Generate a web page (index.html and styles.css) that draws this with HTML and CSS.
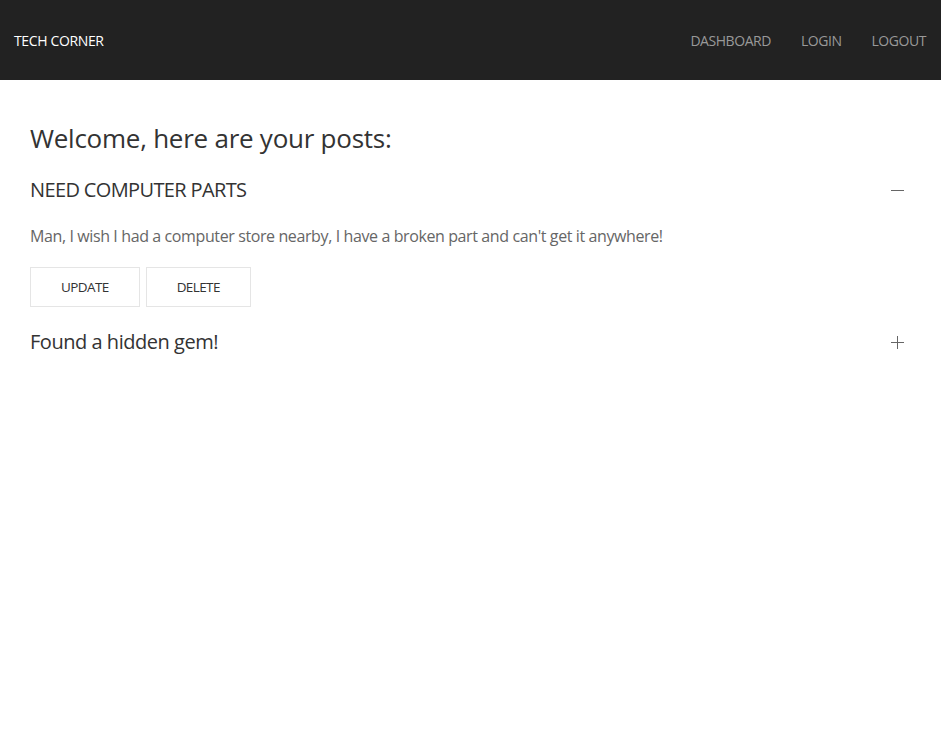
FILE: index.html
```html
<!DOCTYPE html>
<html lang="en">
<head>
<meta charset="utf-8">
<title>Tech Corner</title>
<link rel="stylesheet" href="styles.css">
</head>
<body>
<nav class="navbar">
  <a class="logo" href="#">TECH CORNER</a>
  <ul class="nav">
    <li><a href="#">DASHBOARD</a></li>
    <li><a href="#">LOGIN</a></li>
    <li><a href="#">LOGOUT</a></li>
  </ul>
</nav>
<main class="container">
  <h3 class="welcome">Welcome, here are your posts:</h3>
  <ul class="accordion">
    <li class="item open">
      <a class="title caps" href="#">NEED COMPUTER PARTS
        <svg class="icon" width="13" height="13" viewBox="0 0 13 13"><rect x="0" y="6" width="13" height="1" fill="#666"/></svg>
      </a>
      <div class="content">
        <p>Man, I wish I had a computer store nearby, I have a broken part and can't get it anywhere!</p>
        <div class="buttons">
          <button class="btn">UPDATE</button>
          <button class="btn">DELETE</button>
        </div>
      </div>
    </li>
    <li class="item">
      <a class="title" href="#">Found a hidden gem!
        <svg class="icon" width="13" height="13" viewBox="0 0 13 13"><rect x="0" y="6" width="13" height="1" fill="#666"/><rect x="6" y="0" width="1" height="13" fill="#666"/></svg>
      </a>
    </li>
  </ul>
</main>
</body>
</html>
```
FILE: styles.css
```css
* { box-sizing: border-box; }
html, body {
  margin: 0;
  padding: 0;
  background: #fff;
  font-family: "Open Sans", "Noto Sans", sans-serif;
  color: #666;
  font-size: 16px;
  line-height: 1.5;
}
.navbar {
  height: 80px;
  background: #222;
  display: flex;
  align-items: center;
  justify-content: space-between;
  padding: 0 15px 0 14px;
}
.logo {
  color: #fff;
  text-decoration: none;
  font-size: 14px;
  letter-spacing: -0.36px;
}
.nav {
  list-style: none;
  margin: 0;
  padding: 0;
  display: flex;
  gap: 30px;
}
.nav a {
  color: #999;
  text-decoration: none;
  font-size: 14px;
  letter-spacing: -0.45px;
}
.container {
  padding: 41px 30px 0;
}
.welcome {
  margin: 0 0 21px;
  font-size: 26px;
  line-height: 34px;
  font-weight: 400;
  color: #333;
  letter-spacing: -0.25px;
}
.accordion {
  list-style: none;
  margin: 0;
  padding: 0;
}
.item + .item { margin-top: 21px; }
.title {
  display: flex;
  justify-content: space-between;
  align-items: center;
  font-size: 20px;
  line-height: 28px;
  color: #333;
  text-decoration: none;
  letter-spacing: -0.47px;
}
.title.caps { letter-spacing: -0.63px; }
.icon { margin-right: 7px; }
.content { margin-top: 20px; }
.content p { margin: 0 0 19px; letter-spacing: -0.39px; }
.buttons { display: flex; gap: 6px; }
.btn {
  height: 40px;
  padding: 0 30px;
  border: 1px solid #e5e5e5;
  background: transparent;
  font-family: inherit;
  font-size: 13.5px;
  letter-spacing: -0.6px;
  color: #333;
}
```
